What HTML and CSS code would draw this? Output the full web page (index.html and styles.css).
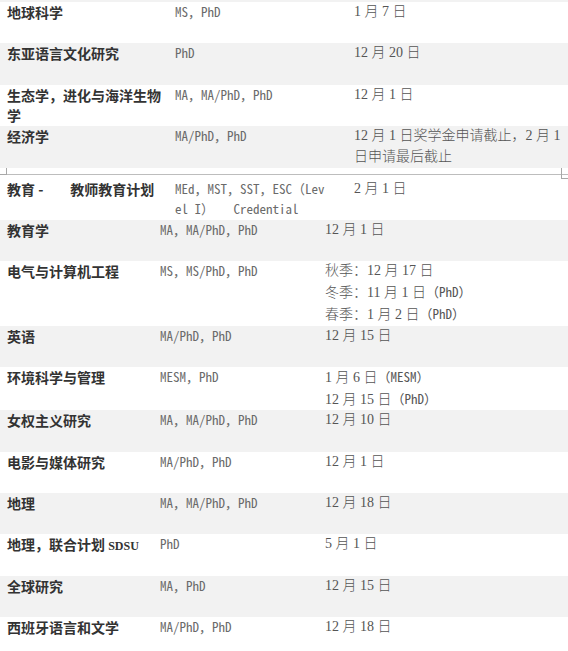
FILE: index.html
```html
<!DOCTYPE html>
<html lang="zh">
<head>
<meta charset="utf-8">
<title>截止日期</title>
<link rel="stylesheet" href="styles.css">
</head>
<body>
<div class="page">
  <div class="strip"></div>
  <div class="tbl tbl-a">
    <div class="row"><div class="c1">地球科学</div><div class="c2">MS，PhD</div><div class="c3">1 月 7 日</div></div>
    <div class="row alt"><div class="c1">东亚语言文化研究</div><div class="c2">PhD</div><div class="c3">12 月 20 日</div></div>
    <div class="row"><div class="c1">生态学，进化与海洋生物学</div><div class="c2">MA，MA/PhD，PhD</div><div class="c3">12 月 1 日</div></div>
    <div class="row alt"><div class="c1">经济学</div><div class="c2">MA/PhD，PhD</div><div class="c3">12 月 1 日奖学金申请截止，2 月 1<br>日申请最后截止</div></div>
  </div>
  <div class="pagebreak">
    <span class="mark mark-l"></span>
    <span class="mark mark-r"></span>
  </div>
  <div class="tbl tbl-a">
    <div class="row first"><div class="c1">教育 -<span class="gap"></span>教师教育计划</div><div class="c2">MEd，MST，SST，ESC（Lev<br>el I）&nbsp;&nbsp;&nbsp;Credential</div><div class="c3">2 月 1 日</div></div>
  </div>
  <div class="tbl tbl-b">
    <div class="row alt"><div class="c1">教育学</div><div class="c2">MA，MA/PhD，PhD</div><div class="c3">12 月 1 日</div></div>
    <div class="row"><div class="c1">电气与计算机工程</div><div class="c2">MS，MS/PhD，PhD</div><div class="c3">秋季：12 月 17 日<br>冬季：11 月 1 日<span class="m">（PhD）</span><br>春季：1 月 2 日<span class="m">（PhD）</span></div></div>
    <div class="row alt"><div class="c1">英语</div><div class="c2">MA/PhD，PhD</div><div class="c3">12 月 15 日</div></div>
    <div class="row"><div class="c1">环境科学与管理</div><div class="c2">MESM，PhD</div><div class="c3">1 月 6 日<span class="m">（MESM）</span><br>12 月 15 日<span class="m">（PhD）</span></div></div>
    <div class="row alt"><div class="c1">女权主义研究</div><div class="c2">MA，MA/PhD，PhD</div><div class="c3">12 月 10 日</div></div>
    <div class="row"><div class="c1">电影与媒体研究</div><div class="c2">MA/PhD，PhD</div><div class="c3">12 月 1 日</div></div>
    <div class="row alt"><div class="c1">地理</div><div class="c2">MA，MA/PhD，PhD</div><div class="c3">12 月 18 日</div></div>
    <div class="row"><div class="c1">地理，联合计划 <span class="lat">SDSU</span></div><div class="c2">PhD</div><div class="c3">5 月 1 日</div></div>
    <div class="row alt"><div class="c1">全球研究</div><div class="c2">MA，PhD</div><div class="c3">12 月 15 日</div></div>
    <div class="row"><div class="c1">西班牙语言和文学</div><div class="c2">MA/PhD，PhD</div><div class="c3">12 月 18 日</div></div>
  </div>
</div>
</body>
</html>
```
FILE: styles.css
```css
html, body {
  margin: 0;
  padding: 0;
  background: #ffffff;
}
.page {
  width: 568px;
  overflow: hidden;
}
.strip {
  height: 2px;
  background: #f2f2f2;
}
.row {
  display: grid;
  min-height: 41.4px;
  line-height: 20.7px;
  background: #ffffff;
}
.row.alt {
  background: #f2f2f2;
}
.row.first {
  padding-top: 4px;
}
.tbl-a .row {
  grid-template-columns: 168px 179px 1fr;
}
.tbl-b .row {
  grid-template-columns: 153px 165px 1fr;
}
.c1, .c2, .c3 {
  padding: 0 6px 0 7px;
}
.c1 {
  font-family: "Noto Sans CJK SC", sans-serif;
  font-weight: 700;
  font-size: 14px;
  color: #333333;
}
.c1 .gap {
  display: inline-block;
  width: 27px;
}
.c1 .lat {
  font-family: "Liberation Serif", serif;
  font-size: 12px;
}
.c2 {
  font-family: "Noto Sans Mono CJK SC", "Liberation Mono", monospace;
  font-size: 13px;
  color: #6a6a6a;
}
.c3 {
  font-family: "Liberation Serif", "Noto Sans CJK SC", serif;
  font-weight: 300;
  font-size: 14px;
  color: #555555;
}
.c3 .m {
  font-family: "Noto Sans Mono CJK SC", "Liberation Mono", monospace;
  font-size: 13px;
}
.pagebreak {
  position: relative;
  height: 6px;
  border-bottom: 1px solid #bdbdbd;
}
.mark {
  position: absolute;
  width: 6px;
  height: 6px;
  border-color: #a8a8a8;
  border-style: solid;
}
.mark-l {
  left: 0;
  top: 0;
  border-width: 0 1px 1px 0;
}
.mark-r {
  right: 0;
  top: 0;
  height: 10px;
  border-width: 0 0 1px 1px;
}
```
